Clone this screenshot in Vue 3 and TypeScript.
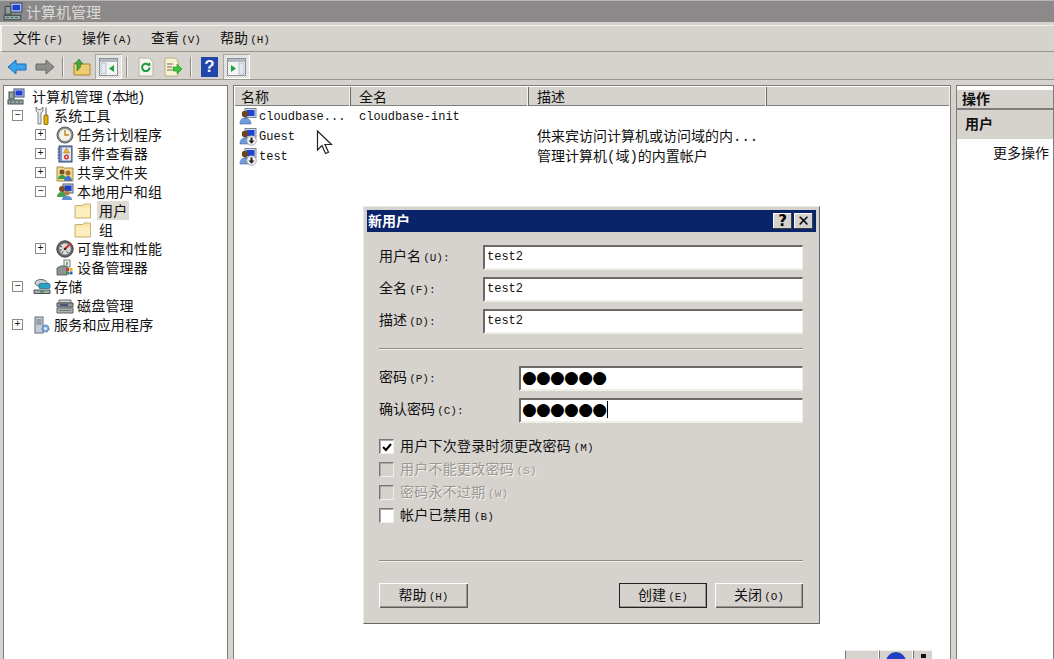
<script setup lang="ts">
interface TreeRow {
  text: string
  mark?: string
  level: number
  toggle?: '+' | '-'
  icon: string
  selected?: boolean
}

const menus = [
  { text: '文件', key: '(F)' },
  { text: '操作', key: '(A)' },
  { text: '查看', key: '(V)' },
  { text: '帮助', key: '(H)' },
]

const tree: TreeRow[] = [
  { text: '计算机管理', mark: '(本地)', level: 0, icon: 'computer' },
  { text: '系统工具', level: 1, toggle: '-', icon: 'tools' },
  { text: '任务计划程序', level: 2, toggle: '+', icon: 'clock' },
  { text: '事件查看器', level: 2, toggle: '+', icon: 'log' },
  { text: '共享文件夹', level: 2, toggle: '+', icon: 'share' },
  { text: '本地用户和组', level: 2, toggle: '-', icon: 'users' },
  { text: '用户', level: 3, icon: 'folder', selected: true },
  { text: '组', level: 3, icon: 'folder' },
  { text: '可靠性和性能', level: 2, toggle: '+', icon: 'gauge' },
  { text: '设备管理器', level: 2, icon: 'device' },
  { text: '存储', level: 1, toggle: '-', icon: 'storage' },
  { text: '磁盘管理', level: 2, icon: 'disk' },
  { text: '服务和应用程序', level: 1, toggle: '+', icon: 'server' },
]

const users = [
  { name: 'cloudbase...', full: 'cloudbase-init', desc: '', icon: 'user' },
  { name: 'Guest', full: '', desc: '供来宾访问计算机或访问域的内...', icon: 'userdown' },
  { name: 'test', full: '', desc: '管理计算机(域)的内置帐户', icon: 'userdown' },
]

const nameFields = [
  { label: '用户名', key: '(U):' },
  { label: '全名', key: '(F):' },
  { label: '描述', key: '(D):' },
]

const options = [
  { text: '用户下次登录时须更改密码', key: '(M)', checked: true, disabled: false },
  { text: '用户不能更改密码', key: '(S)', checked: false, disabled: true },
  { text: '密码永不过期', key: '(W)', checked: false, disabled: true },
  { text: '帐户已禁用', key: '(B)', checked: false, disabled: false },
]
</script>

<template>
  <div class="app">
    <svg class="defs" width="0" height="0">
      <symbol id="computer" viewBox="0 0 18 18">
        <rect x="7" y="1" width="10" height="8" fill="#cfd6e6" stroke="#3c4c78" />
        <rect x="8.500" y="2.500" width="7" height="5" fill="#1c3fd0" />
        <rect x="2" y="4" width="5" height="7" fill="#8fa0a0" stroke="#40504a" />
        <rect x="1" y="12" width="15" height="4" fill="#9aa8a8" stroke="#40504a" />
        <path d="M3 14h2M7 14h2M11 14h2" stroke="#2a6a50" />
      </symbol>
      <symbol id="tools" viewBox="0 0 18 18">
        <path d="M3 0v4l2 2v11h3V6l2-2V0L8 2.500H5z" fill="#e4e6e8" stroke="#606468" stroke-width=".8" />
        <rect x="12" y="0.500" width="2" height="8" fill="#a8a8a8" />
        <rect x="11" y="8" width="4" height="9.500" rx="1" fill="#eab308" stroke="#6b5200" stroke-width=".8" />
      </symbol>
      <symbol id="clock" viewBox="0 0 18 18">
        <circle cx="9" cy="9" r="8" fill="#8d9092" stroke="#55585a" />
        <circle cx="9" cy="9" r="6" fill="#f6f3e4" />
        <path d="M9 4v5h4" fill="none" stroke="#b98a24" stroke-width="1.400" />
      </symbol>
      <symbol id="log" viewBox="0 0 18 18">
        <rect x="3" y="1" width="13" height="16" fill="#7a93c8" stroke="#34466e" />
        <rect x="6" y="2.500" width="9" height="13" fill="#e4e8f0" />
        <path d="M3 4H1.500M3 7H1.500M3 10H1.500M3 13H1.500" stroke="#34466e" />
        <path d="M10.500 3l3 5h-6z" fill="#eeb422" stroke="#8a6a10" stroke-width=".5" />
        <circle cx="10.500" cy="12" r="2.500" fill="#d92f2f" />
        <circle cx="10.500" cy="12" r="1" fill="#fff" />
      </symbol>
      <symbol id="share" viewBox="0 0 18 18">
        <path d="M1 3h6l1 1h9v13H1z" fill="#f0d98e" stroke="#a78b3e" />
        <circle cx="6" cy="8" r="2.500" fill="#7b4a26" />
        <path d="M2 15c0-3 2-4 4-4s4 1 4 4z" fill="#3f9a4a" />
        <circle cx="12" cy="9" r="2.500" fill="#a66a38" />
        <path d="M8 17c0-3 2-5 4-5s4 2 4 5z" fill="#3f74c8" />
      </symbol>
      <symbol id="users" viewBox="0 0 18 18">
        <rect x="7" y="1" width="10" height="9" fill="#c8cfdc" stroke="#55607a" />
        <rect x="8.500" y="2.500" width="7" height="5.500" fill="#1f3fc4" />
        <circle cx="6" cy="6" r="3" fill="#7d5128" />
        <path d="M1 14c0-3 2-5 5-5s4 2 4 5z" fill="#47a04c" />
        <circle cx="11" cy="10" r="2.500" fill="#b27a42" />
        <path d="M6 17c0-3 2-4 5-4s5 1 5 4z" fill="#5b8fd0" />
      </symbol>
      <symbol id="folder" viewBox="0 0 18 18">
        <path d="M1 3.500h8l1-1.500h6.500v14H1z" fill="#fbe7ac" stroke="#c8b272" />
        <path d="M2 6h14v9H2z" fill="#fdeebf" />
      </symbol>
      <symbol id="gauge" viewBox="0 0 18 18">
        <circle cx="9" cy="9" r="8.200" fill="#65686a" stroke="#3e4042" />
        <circle cx="9" cy="9" r="5.800" fill="#d8d8d4" />
        <path d="M9 9l4-4" stroke="#d6242a" stroke-width="2" />
        <path d="M13 2l3 3-2 1z" fill="#d6242a" />
        <path d="M4 6l2 1M3.500 10h2M6 13l1-1.500M12 13l-1-1.500" stroke="#333" />
        <circle cx="9" cy="9" r="1.300" fill="#333" />
      </symbol>
      <symbol id="device" viewBox="0 0 18 18">
        <rect x="8" y="1" width="6" height="7" fill="#eef0ee" stroke="#7a8080" />
        <rect x="10" y="3" width="2" height="3" fill="#7aa67a" />
        <path d="M1 9l4-2h6v9H1z" fill="#8e9494" stroke="#4a5050" stroke-width=".8" />
        <rect x="10" y="9" width="3" height="3" fill="#d83030" />
        <rect x="13.500" y="9" width="3" height="3" fill="#e4b020" />
        <rect x="10" y="12.500" width="3" height="3" fill="#2f9a40" />
        <rect x="13.500" y="12.500" width="3" height="3" fill="#2f5fd0" />
      </symbol>
      <symbol id="storage" viewBox="0 0 18 18">
        <ellipse cx="8" cy="5" rx="6" ry="3.500" fill="#c8d2d4" stroke="#5c6668" />
        <rect x="6" y="5.500" width="11" height="5" rx="1" fill="#2da0c8" stroke="#1c6680" stroke-width=".7" />
        <path d="M1 12h16v3.500H1z" fill="#a5acac" stroke="#4e5556" />
        <rect x="7" y="13" width="4" height="1.500" fill="#3a9a56" />
      </symbol>
      <symbol id="disk" viewBox="0 0 18 18">
        <path d="M3 3h12v3H3z" fill="#d0d4d4" stroke="#676c6c" />
        <path d="M1 6h16v4H1z" fill="#8f9898" stroke="#4a5252" />
        <path d="M4 8h8" stroke="#2d3a6a" stroke-width="1.400" />
        <path d="M1 11h16v5H1z" fill="#aeb4b4" stroke="#5c6262" />
        <path d="M3 13.500h12" stroke="#70787a" />
      </symbol>
      <symbol id="server" viewBox="0 0 18 18">
        <rect x="2" y="1" width="8" height="16" fill="#c6ccd4" stroke="#666e7a" />
        <path d="M3.500 4h5M3.500 6h5M3.500 8h5" stroke="#66707e" />
        <circle cx="12.500" cy="12.500" r="3.500" fill="#80aadc" stroke="#3c6cac" stroke-dasharray="2 1" />
        <circle cx="12.500" cy="12.500" r="1.300" fill="#fff" />
      </symbol>
      <symbol id="user" viewBox="0 0 18 18">
        <rect x="6" y="0.500" width="11" height="9" fill="#d2d8e4" stroke="#7a8498" />
        <rect x="7.500" y="2" width="8" height="6" fill="#1e44d6" />
        <circle cx="6" cy="6" r="3.200" fill="#6c4420" />
        <path d="M1 16c0-4 2-6 5-6s6 2 6 6z" fill="#6e9cd8" stroke="#3d6aa6" stroke-width=".6" />
      </symbol>
      <symbol id="userdown" viewBox="0 0 18 18">
        <use href="#user" />
        <circle cx="12.500" cy="12.500" r="4.800" fill="#f2f2f2" stroke="#8a8a8a" stroke-width=".7" />
        <path d="M11.500 9.500h2v3h2l-3 3.300-3-3.300h2z" fill="#222" />
      </symbol>
    </svg>

    <header class="titlebar">
      <svg class="ic big"><use href="#computer" /></svg>
      <span>计算机管理</span>
    </header>

    <nav class="menubar">
      <span v-for="m in menus" :key="m.text" class="menu">{{ m.text }} <small class="key">{{ m.key }}</small></span>
    </nav>

    <div class="toolbar">
      <span class="tool">
        <svg width="20" height="20" viewBox="0 0 20 20"><path d="M1 10l8-7v4h10v6H9v4z" fill="#3ba1ea" stroke="#1b6bb8" /></svg>
      </span>
      <span class="tool">
        <svg width="20" height="20" viewBox="0 0 20 20"><path d="M19 10l-8-7v4H1v6h10v4z" fill="#8e8e8c" stroke="#666" /></svg>
      </span>
      <i class="sep"></i>
      <span class="tool">
        <svg width="20" height="20" viewBox="0 0 20 20">
          <path d="M2 6h6l1 1h9v11H2z" fill="#f0cc70" stroke="#a8842a" />
          <path d="M5 14V7h-2l4-5 4 5H8.500v3z" fill="#3fa83f" stroke="#1e7a1e" stroke-width=".6" />
        </svg>
      </span>
      <span class="tool pressed">
        <svg width="19" height="18" viewBox="0 0 19 18">
          <rect x=".5" y=".5" width="18" height="17" fill="#f4f4f2" stroke="#8b929c" />
          <rect x="1" y="1" width="17" height="3" fill="#b4b9c0" />
          <rect x="2" y="5" width="5" height="11" fill="#e2e8f0" stroke="#98a8bc" stroke-width=".6" />
          <path d="M15 7v7l-5-3.500z" fill="#1fa244" />
        </svg>
      </span>
      <i class="sep"></i>
      <span class="tool">
        <svg width="18" height="20" viewBox="0 0 18 20">
          <path d="M2 1h10l4 4v14H2z" fill="#f6f6ee" stroke="#b4b4a8" />
          <path d="M12.500 10.500a3.700 3.700 0 1 1-1.400-3" fill="none" stroke="#1f9a3c" stroke-width="2" />
          <path d="M13 5l.5 4-4-.5z" fill="#1f9a3c" />
        </svg>
      </span>
      <span class="tool">
        <svg width="20" height="20" viewBox="0 0 20 20">
          <path d="M2 1h10l3 3v15H2z" fill="#f8f2d4" stroke="#b8ae84" />
          <path d="M4 7h6M4 10h5M4 13h5" stroke="#6a6a50" />
          <path d="M10 10h4V7l5 5-5 5v-3h-4z" fill="#3fc03f" stroke="#1f8a2a" stroke-width=".6" />
        </svg>
      </span>
      <i class="sep"></i>
      <span class="tool help"><b>?</b></span>
      <span class="tool pressed">
        <svg width="19" height="18" viewBox="0 0 19 18">
          <rect x=".5" y=".5" width="18" height="17" fill="#f4f4f2" stroke="#8b929c" />
          <rect x="1" y="1" width="17" height="3" fill="#b4b9c0" />
          <rect x="12" y="5" width="5" height="11" fill="#e2e8f0" stroke="#98a8bc" stroke-width=".6" />
          <path d="M4 7v7l5-3.500z" fill="#1fa244" />
        </svg>
      </span>
    </div>

    <main class="panes">
      <section class="pane tree">
        <div v-for="row in tree" :key="row.text" class="tree-row" :class="`lv${row.level}`">
          <span v-if="row.level > 0" class="toggle" :class="{ blank: !row.toggle }">{{ row.toggle === '+' ? '+' : row.toggle === '-' ? '−' : '' }}</span>
          <svg class="ic"><use :href="`#${row.icon}`" /></svg>
          <span class="label" :class="{ selected: row.selected }">{{ row.text }}<span v-if="row.mark" class="mark">{{ row.mark }}</span></span>
        </div>
      </section>

      <section class="pane list">
        <div class="list-head">
          <span class="col c1">名称</span>
          <span class="col c2">全名</span>
          <span class="col c3">描述</span>
          <span class="col c4"></span>
        </div>
        <div v-for="u in users" :key="u.name" class="list-row">
          <span class="c1 cell">
            <svg class="ic"><use :href="`#${u.icon}`" /></svg>
            <span class="mono">{{ u.name }}</span>
          </span>
          <span class="c2 cell mono">{{ u.full }}</span>
          <span class="c3 cell desc">{{ u.desc }}</span>
        </div>
      </section>

      <aside class="pane actions">
        <h2 class="act-head">操作</h2>
        <h3 class="act-sec">用户</h3>
        <div class="act-item">更多操作</div>
      </aside>
    </main>

    <!-- 鼠标指针 -->
    <svg class="cursor" width="18" height="26" viewBox="0 0 18 26">
      <path d="M1.500 1v19l4.500-4.500 3.500 8 3-1.300-3.500-7.700h6.500z" fill="#fff" stroke="#222" stroke-width="1.200" />
    </svg>

    <div class="tray">
      <span class="tray-btn"></span>
      <span class="tray-btn"><i class="globe"></i></span>
      <span class="tray-btn small"><i class="notch"></i></span>
    </div>

    <div class="dialog">
      <div class="dlg-title">
        <span class="dlg-name">新用户</span>
        <span class="dlg-btns">
          <button class="cap">?</button>
          <button class="cap">✕</button>
        </span>
      </div>

      <div class="dlg-body">
        <div class="fields">
          <label v-for="f in nameFields" :key="f.label" class="field">
            <span class="flabel">{{ f.label }} <small class="key">{{ f.key }}</small></span>
            <span class="input mono">test2</span>
          </label>
        </div>

        <hr class="rule first" />

        <div class="fields pw">
          <label class="field">
            <span class="flabel">密码 <small class="key">(P):</small></span>
            <span class="input dots">●●●●●●</span>
          </label>
          <label class="field">
            <span class="flabel">确认密码 <small class="key">(C):</small></span>
            <span class="input dots">●●●●●●<i class="caret"></i></span>
          </label>
        </div>

        <div class="checks">
          <div v-for="o in options" :key="o.text" class="check" :class="{ off: o.disabled }">
            <span class="box">
              <svg v-if="o.checked" width="10" height="10" viewBox="0 0 10 10"><path d="M1 5l3 3 5-6" fill="none" stroke="#000" stroke-width="2" /></svg>
            </span>
            <span>{{ o.text }} <small class="key">{{ o.key }}</small></span>
          </div>
        </div>

        <hr class="rule last" />

        <div class="buttons">
          <button class="btn wide">帮助 <small class="key">(H)</small></button>
          <span class="spacer"></span>
          <button class="btn default">创建 <small class="key">(E)</small></button>
          <button class="btn">关闭 <small class="key">(O)</small></button>
        </div>
      </div>
    </div>
  </div>
</template>

<style>
html,
body {
  margin: 0;
  overflow: hidden;
}
</style>

<style scoped>
.app {
  position: relative;
  display: flex;
  flex-direction: column;
  width: 1054px;
  height: 659px;
  overflow: hidden;
  background: #d6d3ce;
  color: #111;
  font-family: 'Noto Sans CJK SC', sans-serif;
  font-size: 14px;
  line-height: 19px;
}
.defs {
  position: absolute;
}
.ic {
  flex: none;
  width: 18px;
  height: 18px;
}
.ic.big {
  width: 20px;
  height: 20px;
}
.key {
  margin-left: -1px;
  font-family: 'Liberation Mono', monospace;
  font-size: 11px;
  color: #111;
}
.mark {
  margin-left: 2px;
  font-family: 'Liberation Mono', 'Noto Sans CJK SC', monospace;
  font-size: 14px;
  letter-spacing: -1.5px;
}
.mono {
  font-family: 'Liberation Mono', monospace;
  font-size: 12px;
  color: #111;
}

.titlebar {
  display: flex;
  align-items: center;
  gap: 3px;
  height: 21px;
  padding: 0 0 0 3px;
  border-top: 1px solid #b8b6b2;
  background: #8b8989;
  color: #dcdad4;
  font-size: 15px;
}
.menubar {
  display: flex;
  align-items: center;
  height: 27px;
  margin-top: 3px;
  padding-left: 11px;
  gap: 19px;
  border-top: 1px solid #f4f2ee;
  border-left: 2px solid #f4f2ee;
  border-bottom: 1px solid #9a9790;
  box-sizing: border-box;
}
.menu {
  white-space: nowrap;
  width: 50px;
}
.toolbar {
  display: flex;
  align-items: center;
  height: 28px;
  padding: 2px 0 0 7px;
  border-bottom: 1px solid #9a9790;
  box-sizing: border-box;
}
.tool {
  display: flex;
  align-items: center;
  justify-content: center;
  width: 27px;
  height: 25px;
}
.tool:first-child {
  width: 20px;
  margin-right: 4px;
}
.tool.pressed {
  background: repeating-conic-gradient(#d6d3ce 0 25%, #f6f5f2 0 50%) 0 0 / 2px 2px;
  box-shadow: inset 1px 1px 0 #aaa8a2, inset -1px -1px 0 #fff;
}
.tool.help {
  width: 17px;
  height: 20px;
  margin: 0 5px;
  background: #2145a8;
  color: #f2f4fa;
  font: 700 17px 'Liberation Sans', sans-serif;
}
.sep {
  width: 1px;
  height: 20px;
  margin: 0 5px 0 4px;
  background: #8e8b84;
  box-shadow: 1px 0 0 #f4f2ee;
}

.panes {
  flex: 1;
  display: flex;
  gap: 5px;
  min-height: 0;
  margin-top: 5px;
  padding-left: 3px;
}
.pane {
  background: #fff;
  border: 1px solid #7f7d78;
  border-bottom: 0;
  box-sizing: border-box;
}
.tree {
  width: 225px;
  padding-top: 1px;
}
.tree-row {
  display: flex;
  align-items: center;
  height: 19px;
  white-space: nowrap;
  letter-spacing: 0.2px;
}
.lv0 {
  padding-left: 3px;
  gap: 7px;
}
.lv0 .label {
  padding-top: 2px;
}
.lv1 {
  padding-left: 8px;
}
.lv2 {
  padding-left: 31px;
}
.lv3 {
  padding-left: 70px;
}
.toggle {
  flex: none;
  display: flex;
  align-items: center;
  justify-content: center;
  width: 9px;
  height: 9px;
  margin-right: 10px;
  border: 1px solid #8a8a8a;
  font: 10px/9px 'Liberation Mono', monospace;
  color: #111;
}
.toggle.blank {
  visibility: hidden;
}
.lv3 .toggle {
  display: none;
}
.label {
  padding: 0 2px;
  margin-left: 1px;
}
.lv0 .label {
  margin-left: -2px;
}
.lv3 .label {
  margin-left: 5px;
}
.label.selected {
  background: #dedbd5;
}

.list {
  width: 718px;
}
.list-head {
  display: flex;
  height: 19px;
  margin: 1px 0 1px 1px;
  background: #d6d3ce;
  box-shadow: inset 0 -1px 0 #807e78;
}
.col {
  box-sizing: border-box;
  padding-left: 8px;
  border-right: 1px solid #6f6d68;
  box-shadow: inset -1px 0 0 #f4f2ee;
}
.col.c1 {
  width: 116px;
  padding-left: 6px;
}
.c2 {
  width: 178px;
}
.c3 {
  width: 238px;
}
.c4 {
  flex: 1;
  border-right: 0;
}
.list-row {
  display: flex;
  align-items: center;
  height: 20px;
  padding-left: 5px;
  white-space: nowrap;
}
.cell {
  display: flex;
  align-items: center;
  gap: 2px;
  font-size: 14px;
}
.list-row .c1 {
  width: 120px;
}
.list-row .mono,
.list-row .c2 {
  padding-top: 1px;
  font-size: 12px;
}
.desc {
  padding-top: 1px;
  font-family: 'Liberation Mono', 'Noto Sans CJK SC', monospace;
}

.actions {
  flex: 1;
  padding-top: 4px;
}
.act-head {
  margin: 0;
  height: 18px;
  padding-left: 5px;
  background: #d6d3ce;
  border-bottom: 2px solid #807e78;
  font-size: 14px;
  line-height: 16px;
}
.act-sec {
  margin: 0;
  height: 29px;
  padding-left: 8px;
  background: #d6d3ce;
  font-size: 14px;
  line-height: 27px;
}
.act-item {
  padding: 3px 0 0 36px;
  line-height: 20px;
}

.cursor {
  position: absolute;
  left: 316px;
  top: 130px;
}
.tray {
  position: absolute;
  left: 845px;
  top: 650px;
  display: flex;
  gap: 1px;
}
.tray-btn {
  width: 32px;
  height: 9px;
  background: #d6d3ce;
  border-left: 1px solid #777;
  border-top: 1px solid #f4f2ee;
  overflow: hidden;
}
.tray-btn.small {
  width: 18px;
}
.globe {
  display: block;
  width: 20px;
  height: 20px;
  margin: 1px auto;
  border-radius: 50%;
  background: #2040c0;
}
.notch {
  display: block;
  width: 5px;
  height: 4px;
  margin: 3px auto;
  background: #111;
}

.dialog {
  position: absolute;
  left: 363px;
  top: 206px;
  display: flex;
  flex-direction: column;
  width: 457px;
  height: 418px;
  box-sizing: border-box;
  padding: 3px;
  background: #d6d3ce;
  border-top: 1px solid #ece9e2;
  border-left: 1px solid #ece9e2;
  border-right: 1px solid #6a6864;
  border-bottom: 1px solid #6a6864;
}
.dlg-title {
  display: flex;
  align-items: center;
  justify-content: space-between;
  flex: none;
  height: 22px;
  padding: 0 3px 0 1px;
  background: #0a246a;
  color: #fff;
  font-weight: 700;
}
.dlg-name {
  padding-bottom: 2px;
}
.dlg-btns {
  display: flex;
  gap: 2px;
}
.cap {
  display: flex;
  align-items: center;
  justify-content: center;
  width: 19px;
  height: 16px;
  padding: 0;
  border: 0;
  background: #d6d3ce;
  box-shadow: inset -1px -1px 0 #404040, inset 1px 1px 0 #fff;
  color: #000;
  font: 700 15px 'DejaVu Sans', sans-serif;
}
.dlg-body {
  flex: 1;
  display: flex;
  flex-direction: column;
  padding: 13px 13px 0 12px;
}
.fields {
  display: flex;
  flex-direction: column;
  gap: 7px;
}
.field {
  display: flex;
  align-items: center;
  height: 25px;
}
.flabel {
  flex: none;
  width: 104px;
  padding-bottom: 2px;
  white-space: nowrap;
}
.pw {
  gap: 7px;
  margin-top: 16px;
}
.pw .flabel {
  width: 140px;
}
.input {
  flex: 1;
  height: 25px;
  box-sizing: border-box;
  padding: 1px 0 0 2px;
  background: #fff;
  border-top: 2px solid #6c6a66;
  border-left: 2px solid #6c6a66;
  border-right: 1px solid #f0eee8;
  border-bottom: 2px solid #f0eee8;
  line-height: 19px;
  white-space: nowrap;
}
.dots {
  display: flex;
  align-items: center;
  padding: 0 0 2px 1px;
  font-family: 'DejaVu Sans', sans-serif;
  font-size: 17px;
  line-height: 19px;
  color: #000;
  letter-spacing: -0.8px;
}
.caret {
  width: 1px;
  height: 17px;
  margin-left: 1px;
  background: #000;
}
.rule {
  width: 100%;
  margin: 0;
  border: 0;
  border-top: 1px solid #8f8d88;
  border-bottom: 1px solid #f4f2ee;
}
.rule.first {
  margin-top: 14px;
}
.rule.last {
  margin-top: 35px;
}
.checks {
  display: flex;
  flex-direction: column;
  gap: 4px;
  margin-top: 14px;
}
.check {
  display: flex;
  align-items: center;
  height: 19px;
  gap: 6px;
  white-space: nowrap;
  letter-spacing: 0.25px;
}
.box {
  display: flex;
  align-items: center;
  justify-content: center;
  width: 13px;
  height: 13px;
  background: #fff;
  border-top: 1px solid #777;
  border-left: 1px solid #777;
  border-right: 1px solid #eee;
  border-bottom: 1px solid #eee;
  box-shadow: inset 1px 1px 0 #aaa;
  box-sizing: content-box;
}
.check.off {
  color: #9a9892;
  text-shadow: 1px 1px 0 #f4f2ee;
}
.check.off .key {
  color: #9a9892;
}
.check.off .box {
  background: #d6d3ce;
}
.buttons {
  display: flex;
  gap: 8px;
  margin-top: 21px;
}
.spacer {
  flex: 1;
}
.btn {
  width: 88px;
  height: 25px;
  padding: 0;
  border: 0;
  background: #d6d3ce;
  box-shadow: inset 1px 1px 0 #fff, inset -1px -1px 0 #5e5c58, inset -2px -2px 0 #989690;
  color: #111;
  font: 14px/19px 'Noto Sans CJK SC', sans-serif;
}
.btn.wide {
  width: 89px;
}
.btn.default {
  outline: 1px solid #222;
  outline-offset: -1px;
}
</style>
